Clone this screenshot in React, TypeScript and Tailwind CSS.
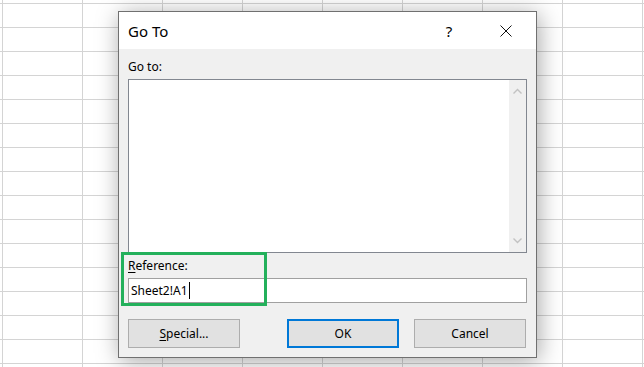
import React from 'react';

const font = { fontFamily: '"Noto Sans", "Open Sans", sans-serif' };

function Chevron({ up }: { up?: boolean }) {
  return (
    <svg width="9" height="6" viewBox="0 0 9 6" className="block">
      <path
        d={up ? 'M0.5 5.5 L4.5 1.5 L8.5 5.5' : 'M0.5 0.5 L4.5 4.5 L8.5 0.5'}
        fill="none"
        stroke="#c2c2c2"
        strokeWidth="1.4"
      />
    </svg>
  );
}

function DialogButton({
  children,
  primary
}: {
  children: React.ReactNode;
  primary?: boolean;
}) {
  return (
    <button
      className={
        primary
          ? 'w-[112px] h-[29px] bg-[#e1e1e1] border-2 border-[#0078d7] text-[12px] text-black leading-4'
          : 'w-[112px] h-[29px] bg-[#e1e1e1] border border-[#adadad] text-[12px] text-black leading-4'
      }>
      {children}
    </button>
  );
}

export default function App() {
  return (
    <div
      className="relative w-[644px] h-[367px] overflow-hidden bg-white bg-[linear-gradient(to_right,#d4d4d4_1px,transparent_1px),linear-gradient(to_bottom,#d4d4d4_1px,transparent_1px)] bg-[size:80px_24px] bg-[position:2px_3px]"
      style={font}>
      <div className="absolute left-[118px] top-[11px] w-[419px] h-[347px] flex flex-col bg-[#f0f0f0] border border-[#707070] shadow-[2px_3px_22px_rgba(0,0,0,0.35)]">
        {/* title bar */}
        <div className="h-[37px] flex items-center bg-white shrink-0">
          <span className="flex-1 pl-[9px] text-[15px] leading-5 text-black">Go To</span>
          <span className="w-[46px] text-center text-[15px] leading-5 text-black">?</span>
          <span className="w-[46px] ml-[11px] mr-[7px] flex justify-center">
            <svg width="12" height="12" viewBox="0 0 12 12" className="block">
              <path d="M0.5 0.5 L11.5 11.5 M11.5 0.5 L0.5 11.5" stroke="#111" strokeWidth="1" />
            </svg>
          </span>
        </div>

        {/* body */}
        <div className="flex flex-col px-[9px] pt-[10px] text-[12px] leading-4 text-black">
          <label className="mb-[4px]">Go to:</label>
          <div className="h-[174px] flex bg-white border border-[#828790]">
            <div className="flex-1" />
            <div className="w-[17px] flex flex-col justify-between items-center bg-[#f0f0f0] py-[8px]">
              <Chevron up />
              <Chevron />
            </div>
          </div>

          <label className="mt-[5px] mb-[4px]">
            <span className="underline underline-offset-2">R</span>eference:
          </label>
          <div className="h-[25px] flex items-center bg-white border border-[#a0a0a0] pl-[2px] leading-[23px]">
            <span>Sheet2!A1</span>
            <span className="w-px h-[17px] bg-black ml-[1px]" />
          </div>

          <div className="mt-[16px] flex items-center">
            <DialogButton>
              <span className="underline underline-offset-2">S</span>pecial...
            </DialogButton>
            <div className="ml-auto flex gap-[15px] mr-[1px]">
              <DialogButton primary>OK</DialogButton>
              <DialogButton>Cancel</DialogButton>
            </div>
          </div>
        </div>

        {/* highlight box */}
        <div className="absolute left-[2px] top-[240px] w-[146px] h-[54px] border-[3px] border-[#23b05b]" />
      </div>
    </div>
  );
}
